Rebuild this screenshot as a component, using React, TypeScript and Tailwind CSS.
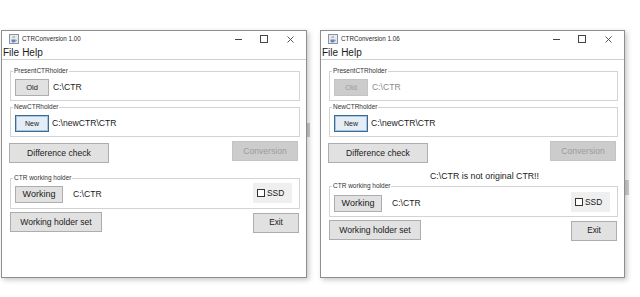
import React from "react";

const BTN =
  "flex items-center justify-center border border-[#adadad] bg-[#e1e1e1] text-[#1a1a1a] leading-none";
const BTN_OFF =
  "flex items-center justify-center border border-[#c4c4c4] bg-[#cccccc] text-[#9b9b9b] leading-none";

function JavaIcon() {
  return (
    <svg width="10" height="10" viewBox="0 0 10 10" className="ml-[7px] shrink-0">
      <rect x="0.5" y="0.5" width="9" height="9" fill="#e4ebf2" stroke="#8796a6" />
      <path d="M2.5 5.5h4v1.6c0 .8-.7 1.4-1.5 1.4H4c-.8 0-1.5-.6-1.5-1.4z" fill="#5f86b0" />
      <path d="M6.5 6h.6c.5 0 .5 1 0 1h-.6" fill="none" stroke="#5f86b0" strokeWidth="0.6" />
      <path d="M4 2.2c.6.6-.4 1.1.2 1.9M5.2 2c.6.6-.4 1.1.2 1.9" fill="none" stroke="#d0742c" strokeWidth="0.7" />
    </svg>
  );
}

function Group({
  title,
  className,
  children,
}: {
  title: string;
  className: string;
  children: React.ReactNode;
}) {
  return (
    <fieldset className={`border border-[#d3d3d3] pl-[4px] ${className}`}>
      <legend className="-ml-[2px] px-[1px] text-[6.5px] leading-[8px] text-[#333]">{title}</legend>
      {children}
    </fieldset>
  );
}

function AppWindow({ version, fixed, width }: { version: string; fixed: boolean; width: string }) {
  return (
    <div
      className={`${width} h-[248px] shrink-0 border border-[#8e8e8e] bg-white shadow-[2px_2px_5px_rgba(0,0,0,0.22)] font-['Liberation_Sans',Arial,sans-serif] text-[#1a1a1a]`}
    >
      {/* title bar */}
      <div className="flex h-[16px] items-center">
        <JavaIcon />
        <span className="ml-[3px] text-[6.3px] text-[#2a2a2a]">CTRConversion {version}</span>
        <div className="ml-auto flex items-center">
          <span className="h-px w-[7px] bg-[#444]" />
          <span className="ml-[18px] h-[8px] w-[8px] border border-[#444]" />
          <svg width="7" height="7" viewBox="0 0 7 7" className="ml-[19px] mr-[12px]">
            <path d="M0.5 0.5l6 6M6.5 0.5l-6 6" stroke="#444" strokeWidth="0.9" />
          </svg>
        </div>
      </div>

      {/* menu */}
      <div className="flex h-[13px] items-center gap-[3px] border-b border-[#cfcfcf] pl-[1px] text-[10px] leading-none">
        <span>File</span>
        <span>Help</span>
      </div>

      {/* content */}
      <div className="flex flex-col pl-[8px] pr-[6px] pt-[7px]">
        <Group title="PresentCTRholder" className="pb-[4px]">
          <div className="flex items-center pt-[4px]">
            <div className={`${fixed ? BTN_OFF : BTN} h-[17px] w-[34px] text-[7.5px]`}>Old</div>
            <span className={`ml-[4px] text-[8.6px] ${fixed ? "text-[#8a8a8a]" : ""}`}>{"C:\\CTR"}</span>
          </div>
        </Group>

        <Group title="NewCTRholder" className="mt-[2px] pb-[4px]">
          <div className="flex items-center pt-[4px]">
            <div className="flex h-[17px] w-[34px] items-center justify-center border border-[#3a6b97] bg-[#e5eef6] text-[7px] leading-none shadow-[inset_0_0_0_1px_#a8c4dd]">
              New
            </div>
            <span className="ml-[3px] text-[8.6px]">{"C:\\newCTR\\CTR"}</span>
          </div>
        </Group>

        <div className="mt-[4px] flex items-start justify-between">
          <div className={`${BTN} -ml-px mt-[2px] h-[20px] w-[100px] text-[8.6px]`}>Difference check</div>
          <div className={`${BTN_OFF} mr-[2px] h-[20px] w-[66px] text-[8.6px]`}>Conversion</div>
        </div>

        {fixed && (
          <div className="mt-[7px] flex h-[12px] items-center pl-[101px] text-[8.8px] leading-none">
            {"C:\\CTR is not original CTR!!"}
          </div>
        )}

        <Group
          title="CTR working holder"
          className={fixed ? "mt-0 pb-[4px]" : "mt-[11px] pb-[5px]"}
        >
          <div className={`flex items-end ${fixed ? "pt-[2px]" : "pt-[1px]"}`}>
            <div className={`${BTN} h-[17px] w-[48px] text-[9px]`}>Working</div>
            <span className="mb-[4px] ml-[10px] text-[8.6px] leading-none">{"C:\\CTR"}</span>
            <div className="ml-auto mr-[7px] flex h-[20px] w-[39px] items-center bg-[#efefef] pl-[4px] text-[8.4px] leading-none">
              <span className="h-[8px] w-[8px] border border-[#333] bg-white" />
              <span className="ml-[2px]">SSD</span>
            </div>
          </div>
        </Group>

        <div className="mt-[3px] flex items-start justify-between">
          <div className={`${BTN} h-[20px] w-[92px] text-[8.6px]`}>Working holder set</div>
          <div className={`${BTN} mr-[1px] mt-[1px] h-[20px] w-[46px] text-[8.2px]`}>Exit</div>
        </div>
      </div>
    </div>
  );
}

export default function App() {
  return (
    <div className="relative h-[297px] w-[640px] overflow-hidden bg-white">
      {/* desktop remnants behind the windows */}
      <div className="absolute left-[306px] top-[123px] h-[14px] w-[4px] bg-[#cdcdcd]" />
      <div className="absolute left-[625px] top-[180px] h-[15px] w-[4px] bg-[#d2d2d2]" />

      <div className="relative flex gap-[13px] pl-[1px] pt-[30px]">
        <AppWindow version="1.00" fixed={false} width="w-[306px]" />
        <AppWindow version="1.06" fixed={true} width="w-[305px]" />
      </div>
    </div>
  );
}
